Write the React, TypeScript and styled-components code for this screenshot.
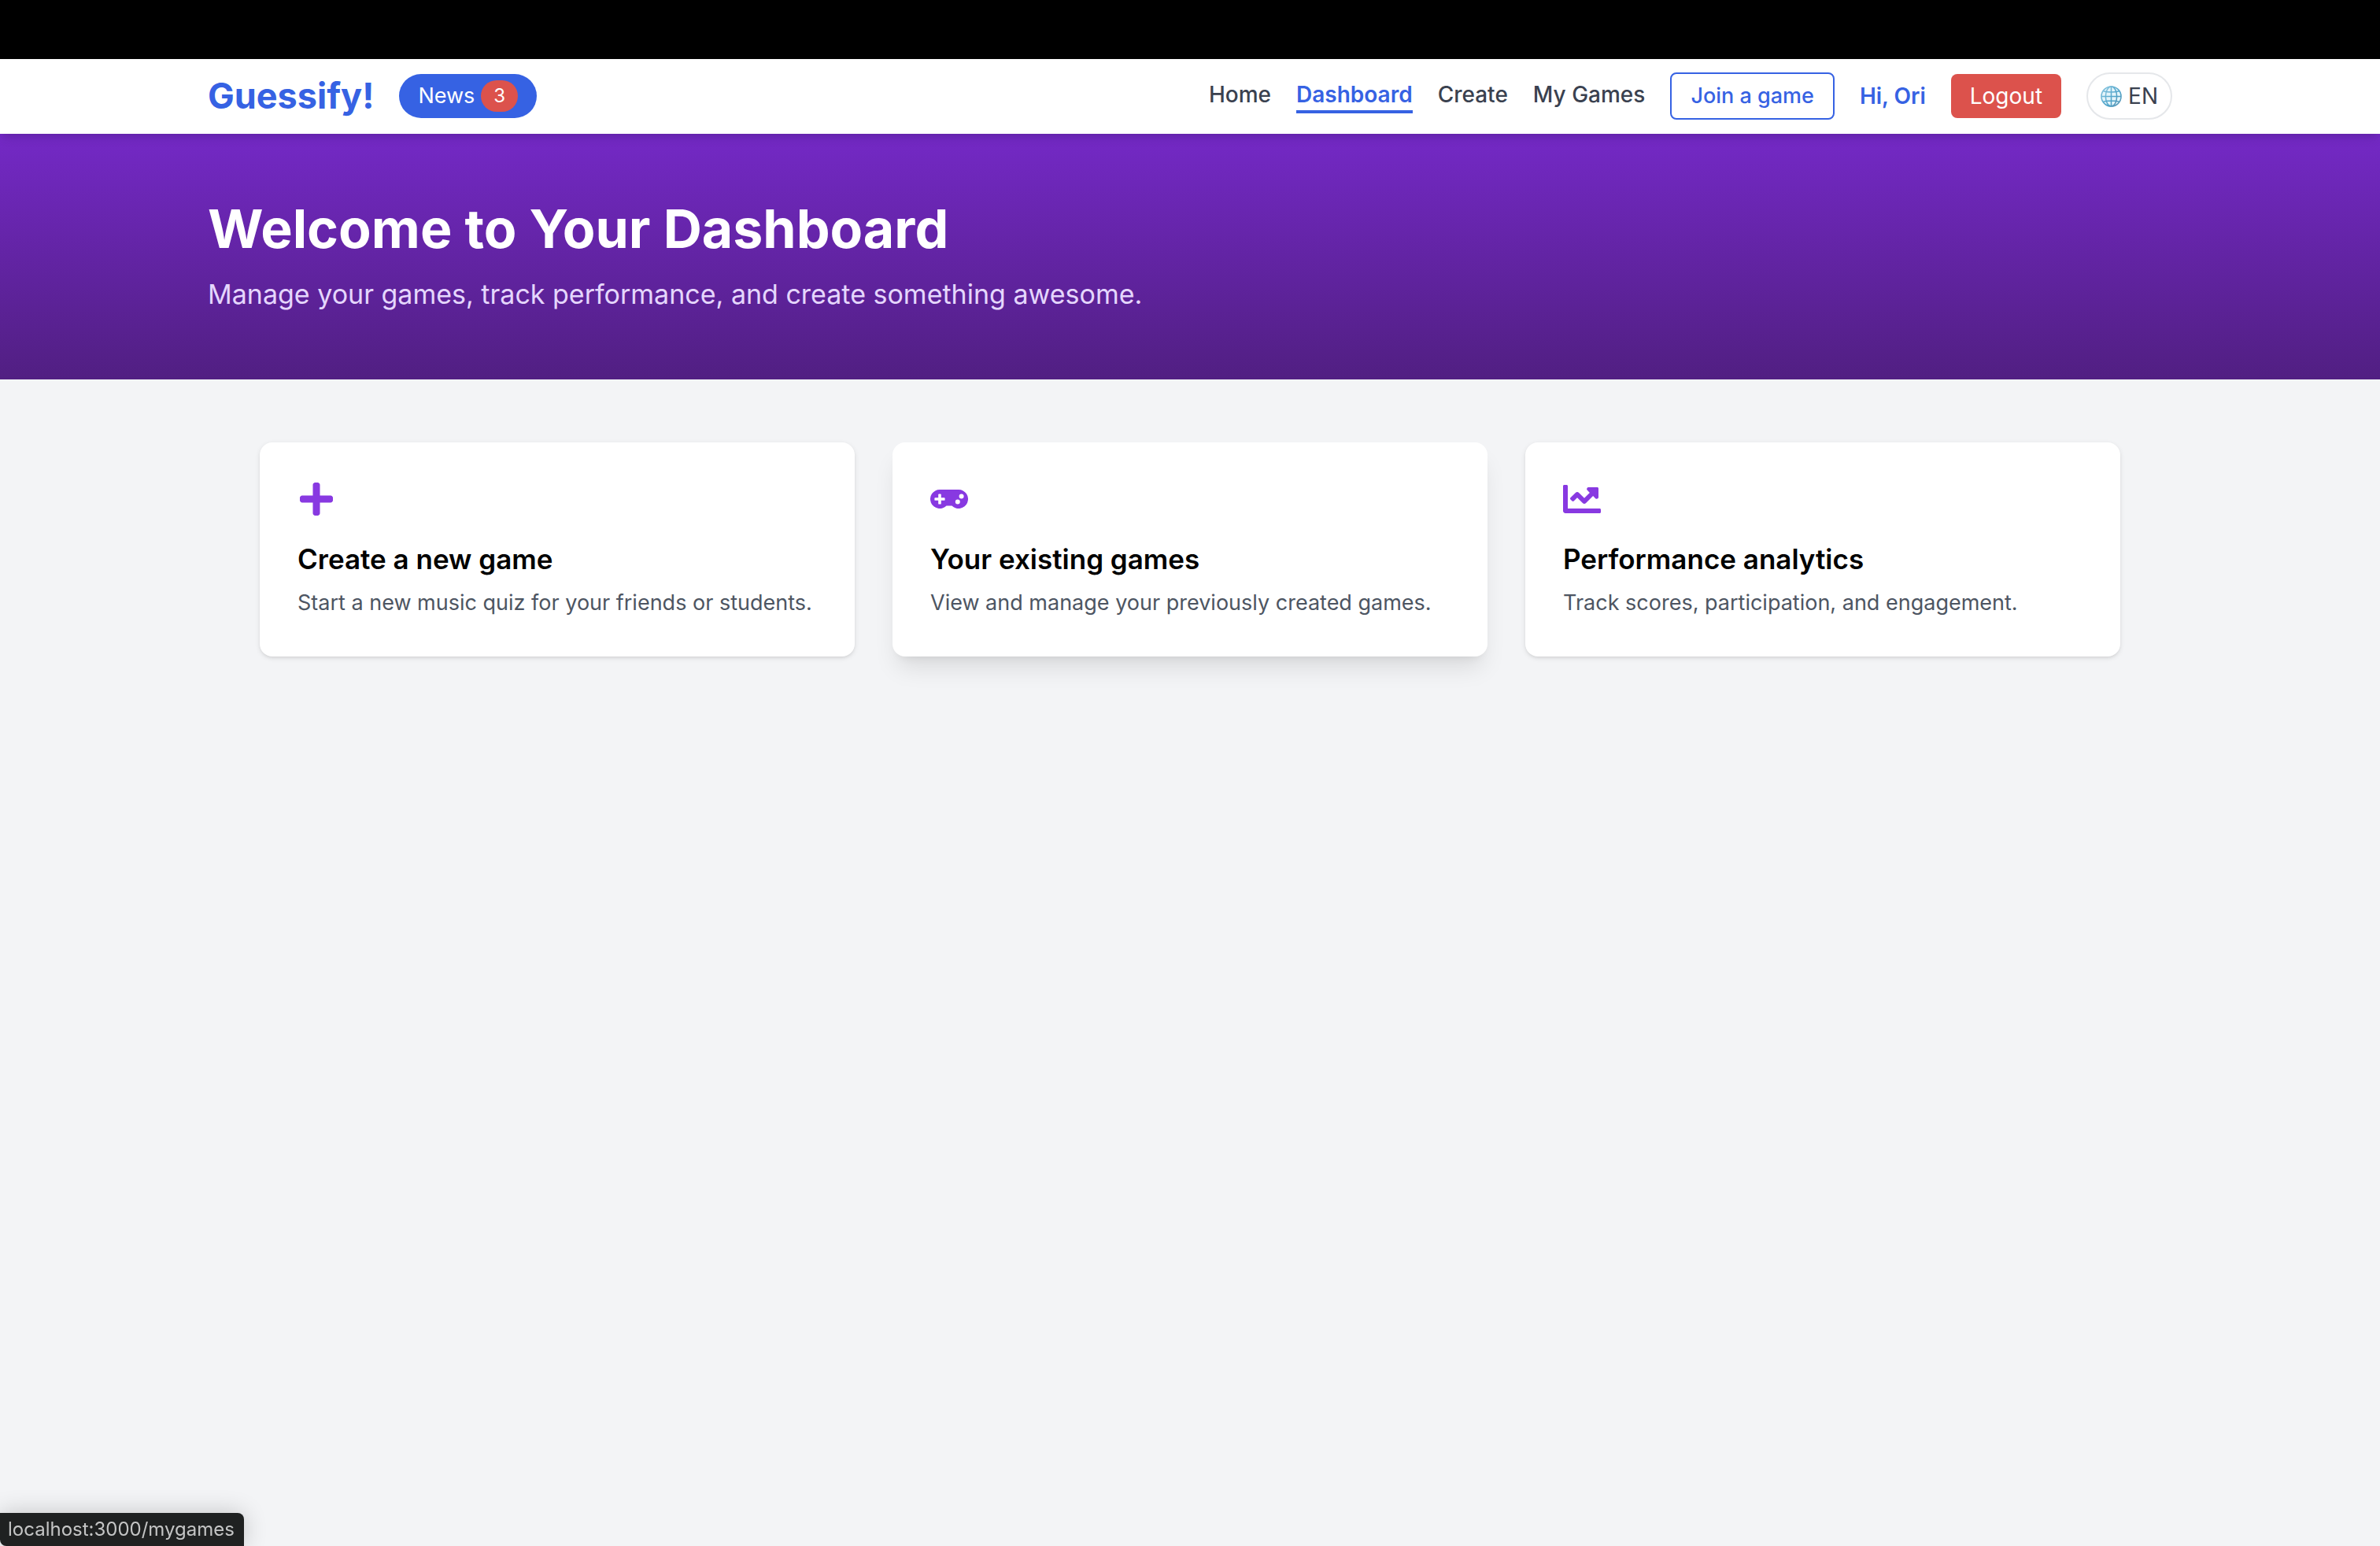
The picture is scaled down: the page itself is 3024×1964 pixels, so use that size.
import React from "react";
import styled, { createGlobalStyle, css } from "styled-components";
import { FaChartLine, FaGamepad, FaPlus } from "react-icons/fa";

const color = {
  blue: "#3662e3",
  red: "#dc524c",
  purple: "#8839e1",
  ink: "#3a414f",
  muted: "#4d5562",
  line: "#e5e7ea",
  page: "#f3f4f6",
};

const GlobalStyle = createGlobalStyle`
  *, *::before, *::after { box-sizing: border-box; }
  html { background: ${color.page}; }
  body {
    margin: 0;
    min-height: 100vh;
    font-family: Inter, "Liberation Sans", sans-serif;
    font-size: 28px;
    line-height: 40px;
    color: #000;
    -webkit-font-smoothing: antialiased;
  }
  h1, h2, p { margin: 0; }
  a { color: inherit; text-decoration: none; }
  button { font: inherit; cursor: pointer; }
`;

const TopStrip = styled.div`
  height: 75px;
  background: #000;
`;

const Header = styled.header`
  position: relative;
  z-index: 1;
  background: #fff;
  box-shadow: 0 8px 12px -2px rgba(0, 0, 0, 0.1), 0 4px 8px -4px rgba(0, 0, 0, 0.1);
`;

const Container = styled.div`
  max-width: 2560px;
  margin: 0 auto;
  padding: 0 32px;
`;

const HeaderRow = styled(Container)`
  display: flex;
  align-items: center;
  justify-content: space-between;
  padding-top: 15px;
  padding-bottom: 16px;
`;

const Brand = styled.div`
  display: flex;
  align-items: center;
  gap: 32px;
`;

const Logo = styled.a`
  && { color: ${color.blue}; }
  font-size: 45px;
  font-weight: 700;
  line-height: 64px;
`;

const pill = css`
  display: inline-flex;
  align-items: center;
  border: 0;
  padding: 8px 24px;
  color: #fff;
`;

const NewsButton = styled.button`
  ${pill}
  gap: 8px;
  border-radius: 28px;
  background: ${color.blue};
  font-size: 27px;
`;

const Count = styled.span`
  padding: 0 16px;
  border-radius: 20px;
  background: ${color.red};
  font-size: 24px;
`;

const Nav = styled.nav`
  display: flex;
  align-items: center;
  gap: 32px;
`;

const NavLink = styled.a<{ $active?: boolean }>`
  && { color: ${(p) => (p.$active ? color.blue : color.ink)}; }
  border-bottom: 4px solid ${(p) => (p.$active ? color.blue : "transparent")};
  font-weight: ${(p) => (p.$active ? 600 : 500)};
`;

const JoinButton = styled.button`
  ${pill}
  border: 2px solid ${color.blue};
  border-radius: 8px;
  background: #fff;
  color: ${color.blue};
  font-size: 27px;
  font-weight: 500;
`;

const Greeting = styled.span`
  color: ${color.blue};
  font-weight: 600;
`;

const LogoutButton = styled.button`
  ${pill}
  border-radius: 8px;
  background: ${color.red};
`;

const LanguageButton = styled.button`
  ${pill}
  gap: 8px;
  padding: 8px 16px;
  border: 2px solid ${color.line};
  border-radius: 30px;
  background: #fff;
  color: ${color.ink};
`;

const Hero = styled.section`
  padding: 80px 0;
  background: linear-gradient(to bottom, #7429c6, #511f82);
`;

const HeroTitle = styled.h1`
  margin-bottom: 16px;
  color: #fff;
  font-size: 68px;
  font-weight: 700;
  line-height: 80px;
`;

const HeroText = styled.p`
  color: #e5d6fd;
  font-size: 34px;
  line-height: 56px;
`;

const CardGrid = styled.main`
  display: grid;
  grid-template-columns: repeat(3, minmax(0, 1fr));
  gap: 48px;
  max-width: 2364px;
  margin: 80px auto;
`;

const Card = styled.a<{ $raised?: boolean }>`
  display: flex;
  flex-direction: column;
  align-items: flex-start;
  padding: 48px;
  border-radius: 16px;
  background: #fff;
  box-shadow: ${(p) =>
    p.$raised
      ? "0 20px 30px -6px rgba(0, 0, 0, 0.1), 0 8px 12px -8px rgba(0, 0, 0, 0.1)"
      : "0 2px 6px rgba(0, 0, 0, 0.1), 0 2px 4px -2px rgba(0, 0, 0, 0.1)"};

  > svg {
    margin-bottom: 24px;
    color: ${color.purple};
    font-size: 48px;
  }
`;

const CardTitle = styled.h2`
  margin-bottom: 8px;
  font-size: 35px;
  font-weight: 600;
  line-height: 56px;
`;

const CardText = styled.p`
  color: ${color.muted};
  font-size: 27px;
`;

const LinkPreview = styled.div`
  position: fixed;
  bottom: 0;
  left: 0;
  height: 42px;
  padding: 0 12px 0 10px;
  border-radius: 0 8px 0 8px;
  background: #1f2121;
  box-shadow: 0 0 30px rgba(0, 0, 0, 0.2);
  color: #c4c5c5;
  font-size: 24px;
  line-height: 42px;
`;

const Globe = () => (
  <svg width="27" height="27" viewBox="0 0 28 28" fill="none" aria-hidden="true">
    <defs>
      <linearGradient id="globe" x1="0" y1="0" x2="1" y2="1">
        <stop offset="0" stopColor="#8ac6e0" />
        <stop offset="0.6" stopColor="#4fa3c9" />
        <stop offset="1" stopColor="#5f97b5" />
      </linearGradient>
    </defs>
    <circle cx="14" cy="14" r="13" fill="#e3f4fa" />
    <g stroke="url(#globe)" strokeWidth="1.6">
      <circle cx="14" cy="14" r="13" />
      <ellipse cx="14" cy="14" rx="7.4" ry="13" />
      <path d="M14 1 14.01 27M1 14 27 14.01M3.4 7Q14 9.6 24.6 7M3.4 21Q14 18.4 24.6 21" />
    </g>
  </svg>
);

const links = ["Home", "Dashboard", "Create", "My Games"];

const cards = [
  {
    icon: <FaPlus />,
    title: "Create a new game",
    text: "Start a new music quiz for your friends or students.",
    href: "#create",
  },
  {
    icon: <FaGamepad />,
    title: "Your existing games",
    text: "View and manage your previously created games.",
    href: "#mygames",
    raised: true,
  },
  {
    icon: <FaChartLine />,
    title: "Performance analytics",
    text: "Track scores, participation, and engagement.",
    href: "#analytics",
  },
];

export default function App() {
  return (
    <>
      <GlobalStyle />
      <TopStrip />
      <Header>
        <HeaderRow>
          <Brand>
            <Logo href="#home">Guessify!</Logo>
            <NewsButton>
              News <Count>3</Count>
            </NewsButton>
          </Brand>
          <Nav>
            {links.map((label) => (
              <NavLink key={label} href="#nav" $active={label === "Dashboard"}>
                {label}
              </NavLink>
            ))}
            <JoinButton>Join a game</JoinButton>
            <Greeting>Hi, Ori</Greeting>
            <LogoutButton>Logout</LogoutButton>
            <LanguageButton>
              <Globe /> EN
            </LanguageButton>
          </Nav>
        </HeaderRow>
      </Header>
      <Hero>
        <Container>
          <HeroTitle>Welcome to Your Dashboard</HeroTitle>
          <HeroText>Manage your games, track performance, and create something awesome.</HeroText>
        </Container>
      </Hero>
      <CardGrid>
        {cards.map((card) => (
          <Card key={card.title} href={card.href} $raised={card.raised}>
            {card.icon}
            <CardTitle>{card.title}</CardTitle>
            <CardText>{card.text}</CardText>
          </Card>
        ))}
      </CardGrid>
      <LinkPreview>localhost:3000/mygames</LinkPreview>
    </>
  );
}
